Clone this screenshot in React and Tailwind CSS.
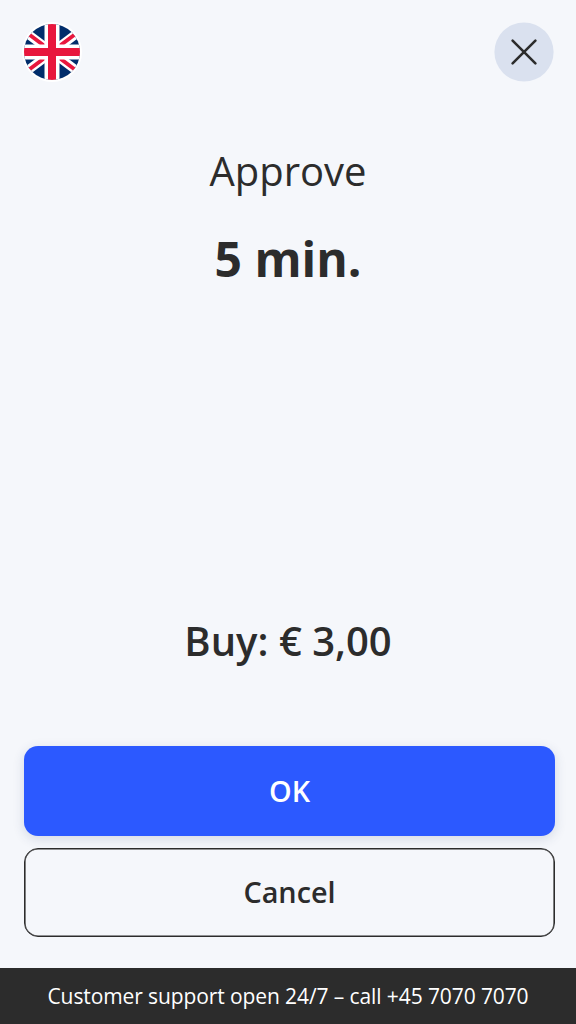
import React from 'react';

function FlagButton() {
  return (
    <button aria-label="Language" className="w-[60px] h-[60px]">
      <svg viewBox="-2 -2 60 60" className="w-[60px] h-[60px]">
        <clipPath id="circle"><circle cx="28" cy="28" r="28" /></clipPath>
        <circle cx="28" cy="28" r="30" fill="#fff" />
        <g clipPath="url(#circle)">
          <rect width="56" height="56" fill="#012d6b" />
          <path d="M-4 4L60 52M-4 52L60 4" stroke="#fff" strokeWidth="9" />
          <path d="M-4 3.6L28 27.6L60 3.6M-4 52.4L28 28.4L60 52.4" stroke="#e8173d" strokeWidth="3.8" fill="none" />
          <path d="M28 0V56M0 28H56" stroke="#fff" strokeWidth="15" />
          <path d="M28 0V56M0 28H56" stroke="#e8173d" strokeWidth="8" />
        </g>
      </svg>
    </button>
  );
}

function App() {
  return (
    <div className="w-full h-screen flex flex-col bg-[#f5f7fb] text-[#2c2c2c] font-['Open_Sans',sans-serif]">
      <header className="flex justify-between items-center px-[22px] pt-[22px]">
        <FlagButton />
        <button aria-label="Close" className="w-[60px] h-[60px] flex items-center justify-center">
          <svg viewBox="0 0 60 60" className="w-[60px] h-[60px]" stroke="#2c2c2c" strokeWidth="2.6" strokeLinecap="round">
            <circle cx="30" cy="30" r="29.6" fill="#dae1ef" stroke="none" />
            <path d="M18.6 18.6L41.4 41.4M41.4 18.6L18.6 41.4" />
          </svg>
        </button>
      </header>

      <main className="flex-1 flex flex-col px-6 text-center">
        <h1 className="mt-[61px] text-[40px] leading-14">Approve</h1>
        <p className="mt-7 text-[48px] leading-16 font-bold">5 min.</p>
        <p className="mt-auto mb-[77px] text-[40px] leading-14 font-semibold">Buy: € 3,00</p>
      </main>

      <div className="flex flex-col gap-3 pl-6 pr-[21px] mb-[31px] text-[28.8px] font-semibold">
        <button className="h-[90px] rounded-[14px] bg-[#2c59ff] text-white shadow-[0_3px_12px_rgba(44,60,110,0.16)]">OK</button>
        <button className="h-[89px] pb-0.5 rounded-[14px] border border-[#2c2c2c] shadow-[inset_0_0_0_0.6px_#2c2c2c]">Cancel</button>
      </div>

      <footer className="h-14 pt-0.5 flex items-center justify-center bg-[#2c2c2c] text-white text-[21px] tracking-[-0.1px]">
        Customer support open 24/7 – call +45 7070 7070
      </footer>
    </div>
  );
}

export default App;
